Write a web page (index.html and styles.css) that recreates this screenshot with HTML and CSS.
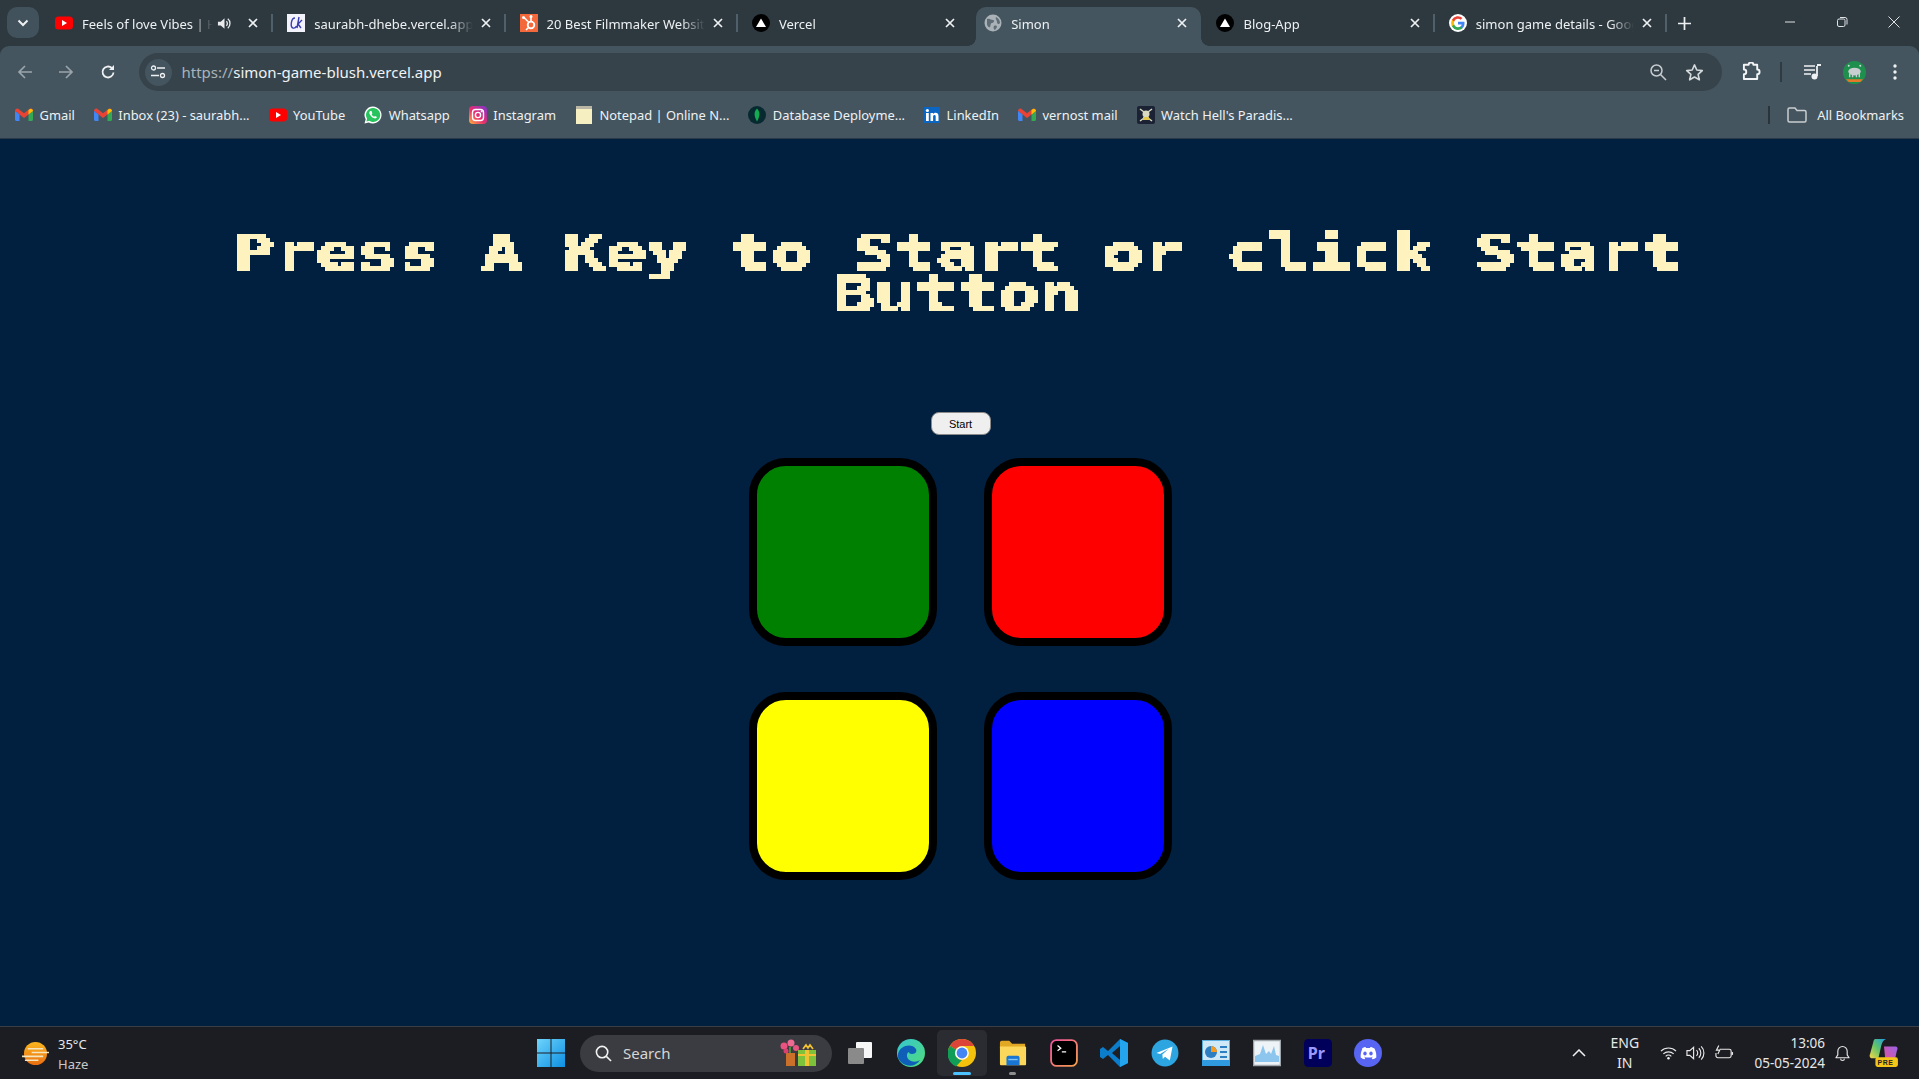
FILE: index.html
```html
<!DOCTYPE html>
<html lang="en">
<head>
<meta charset="utf-8">
<title>Simon</title>
<link rel="stylesheet" href="styles.css">
</head>
<body>
<svg class="defs" width="0" height="0" aria-hidden="true">
  <filter id="pixelate" x="0" y="0" width="100%" height="100%" color-interpolation-filters="sRGB">
    <feFlood x="2" y="2" width="1" height="1" flood-color="#000"/>
    <feComposite width="5" height="5"/>
    <feTile result="grid"/>
    <feComposite in="SourceGraphic" in2="grid" operator="in"/>
    <feComponentTransfer><feFuncA type="discrete" tableValues="0 1 1"/></feComponentTransfer>
    <feMorphology operator="dilate" radius="2"/>
  </filter>
</svg>

<header class="chrome">
  <div class="tabstrip">
    <button class="tab-search"><svg width="12" height="8" viewBox="0 0 12 8"><path d="M1.5 1.5 6 6l4.5-4.5" fill="none" stroke="#eef1f3" stroke-width="2"/></svg></button>
    <div class="tabs">
      <div class="tab">
        <svg class="fav" viewBox="0 0 18 18"><rect x="0" y="2.5" width="18" height="13" rx="3.5" fill="#f00"/><path d="M7 6l5 3-5 3z" fill="#fff"/></svg>
        <span class="tab-title">Feels of love Vibes | Hindi</span>
        <svg class="speaker" viewBox="0 0 16 16"><path d="M1 6v4h3l4 3.5v-11L4 6z" fill="#e8eaed"/><path d="M10 5.5a3.5 3.5 0 0 1 0 5M11.5 3a6.5 6.5 0 0 1 0 10" fill="none" stroke="#e8eaed" stroke-width="1.4"/></svg>
        <svg class="close" viewBox="0 0 10 10"><path d="M1 1l8 8M9 1 1 9" stroke="#eef1f3" stroke-width="1.7"/></svg>
      </div>
      <div class="tab">
        <svg class="fav" viewBox="0 0 18 18"><rect width="18" height="18" fill="#f3f3fb"/><path d="M8 4C4 4 3 13 6 14c1.500.4 3-1 3.500-2M12 3 10 14M15 6l-4 4 3 4" fill="none" stroke="#3a3fae" stroke-width="1.400"/></svg>
        <span class="tab-title">saurabh-dhebe.vercel.app</span>
        <svg class="close" viewBox="0 0 10 10"><path d="M1 1l8 8M9 1 1 9" stroke="#eef1f3" stroke-width="1.7"/></svg>
      </div>
      <div class="tab">
        <svg class="fav" viewBox="0 0 18 18"><rect width="18" height="18" fill="#f4693b"/><circle cx="11" cy="11" r="3.300" fill="none" stroke="#fff" stroke-width="1.800"/><path d="M11 3v5M4 3.500l5 5M6 16l3-3" stroke="#fff" stroke-width="1.600"/><circle cx="3.500" cy="3.500" r="1.500" fill="#fff"/><circle cx="11" cy="2.500" r="1.500" fill="#fff"/></svg>
        <span class="tab-title">20 Best Filmmaker Websites</span>
        <svg class="close" viewBox="0 0 10 10"><path d="M1 1l8 8M9 1 1 9" stroke="#eef1f3" stroke-width="1.7"/></svg>
      </div>
      <div class="tab tab-before-active">
        <svg class="fav" viewBox="0 0 18 18"><circle cx="9" cy="9" r="9" fill="#000"/><path d="M9 4.500l5 8.500H4z" fill="#fff"/></svg>
        <span class="tab-title">Vercel</span>
        <svg class="close" viewBox="0 0 10 10"><path d="M1 1l8 8M9 1 1 9" stroke="#eef1f3" stroke-width="1.7"/></svg>
      </div>
      <div class="tab tab-active">
        <svg class="fav" viewBox="0 0 18 18"><circle cx="9" cy="9" r="8.500" fill="#aab2b8"/><path d="M3 5c3-1 4 1 6 1s1 3-1 3-1 3-2 4-3-1-3-3zM12 3c2 1 4 3 4 6-1 2-3 1-3-1s-2-3-1-5zM10 12c2-1 3 0 3 1l-2 3c-1 0-2-3-1-4z" fill="#5e6c75"/></svg>
        <span class="tab-title">Simon</span>
        <svg class="close" viewBox="0 0 10 10"><path d="M1 1l8 8M9 1 1 9" stroke="#eef1f3" stroke-width="1.7"/></svg>
      </div>
      <div class="tab">
        <svg class="fav" viewBox="0 0 18 18"><circle cx="9" cy="9" r="9" fill="#000"/><path d="M9 4.500l5 8.500H4z" fill="#fff"/></svg>
        <span class="tab-title">Blog-App</span>
        <svg class="close" viewBox="0 0 10 10"><path d="M1 1l8 8M9 1 1 9" stroke="#eef1f3" stroke-width="1.7"/></svg>
      </div>
      <div class="tab">
        <svg class="fav" viewBox="0 0 18 18"><circle cx="9" cy="9" r="9" fill="#fff"/><path d="M15.500 9.200c0-.5 0-1-.1-1.400H9v2.700h3.700a3.200 3.200 0 0 1-1.400 2.100v1.700h2.200c1.300-1.200 2-3 2-5.100z" fill="#4285f4"/><path d="M9 16c1.900 0 3.400-.6 4.500-1.700l-2.200-1.700c-.6.400-1.400.7-2.300.7-1.800 0-3.300-1.200-3.800-2.800H2.900v1.800A7 7 0 0 0 9 16z" fill="#34a853"/><path d="M5.200 10.500a4 4 0 0 1 0-2.900V5.800H2.900a7 7 0 0 0 0 6.500z" fill="#fbbc05"/><path d="M9 4.800c1 0 1.900.4 2.600 1l1.900-1.900A7 7 0 0 0 2.900 5.800l2.300 1.800C5.700 6 7.200 4.800 9 4.800z" fill="#ea4335"/></svg>
        <span class="tab-title">simon game details - Google</span>
        <svg class="close" viewBox="0 0 10 10"><path d="M1 1l8 8M9 1 1 9" stroke="#eef1f3" stroke-width="1.7"/></svg>
      </div>
    </div>
    <svg class="newtab" viewBox="0 0 12 12"><path d="M6 0v12M0 6h12" stroke="#eef1f3" stroke-width="1.600"/></svg>
    <div class="winctl">
      <svg viewBox="0 0 12 12"><path d="M1 6h10" stroke="#dfe3e6" stroke-width="1"/></svg>
      <svg viewBox="0 0 12 12"><rect x="1.500" y="3" width="7.500" height="7.500" rx="1.500" fill="none" stroke="#dfe3e6"/><path d="M4 1.500h5a2 2 0 0 1 2 2v5" fill="none" stroke="#dfe3e6"/></svg>
      <svg viewBox="0 0 12 12"><path d="M.5.500l11 11M11.500.500l-11 11" stroke="#dfe3e6" stroke-width="1"/></svg>
    </div>
  </div>

  <div class="toolbar">
    <svg class="tool tool-dim" viewBox="0 0 16 16"><path d="M15 8H2M8 2 2 8l6 6" fill="none" stroke="#9aa4ab" stroke-width="1.700"/></svg>
    <svg class="tool tool-dim tool-fwd" viewBox="0 0 16 16"><path d="M1 8h13M8 2l6 6-6 6" fill="none" stroke="#9aa4ab" stroke-width="1.700"/></svg>
    <svg class="tool" viewBox="0 0 16 16"><path d="M13.500 8.500a5.500 5.500 0 1 1-1.700-4.500" fill="none" stroke="#eef1f3" stroke-width="1.800"/><path d="M14 1v5H9z" fill="#eef1f3"/></svg>
    <div class="omnibox">
      <span class="site-chip"><svg width="16" height="14" viewBox="0 0 16 14"><circle cx="3.500" cy="3" r="2" fill="none" stroke="#eef1f3" stroke-width="1.300"/><path d="M7 3h8M1 10.500h8" stroke="#eef1f3" stroke-width="1.300"/><circle cx="12.500" cy="10.500" r="2" fill="none" stroke="#eef1f3" stroke-width="1.300"/></svg></span>
      <span class="url"><span class="url-scheme">https://</span>simon-game-blush.vercel.app</span>
      <svg class="omni-icon omni-zoom" viewBox="0 0 18 18"><circle cx="7.500" cy="7.500" r="5.500" fill="none" stroke="#c6ccd0" stroke-width="1.500"/><path d="M11.500 11.500 17 17M5 7.500h5" stroke="#c6ccd0" stroke-width="1.500"/></svg>
      <svg class="omni-icon" viewBox="0 0 20 20"><path d="M10 2l2.400 5.400 5.800.6-4.400 3.900 1.300 5.800L10 14.700l-5.100 3 1.300-5.800L1.800 8l5.800-.6z" fill="none" stroke="#d4d9dc" stroke-width="1.700" stroke-linejoin="round"/></svg>
    </div>
    <svg class="ext" viewBox="0 0 20 20"><path d="M2 4h5a2.500 2.500 0 0 1 5 0h4v5a2.500 2.500 0 0 1 0 5v5H2v-5a2.500 2.500 0 0 0 0-5z" transform="translate(1 -1) scale(.95)" fill="none" stroke="#f2f4f5" stroke-width="2" stroke-linejoin="round"/></svg>
    <span class="tool-sep"></span>
    <svg class="media" viewBox="0 0 18 16"><path d="M0 2h11M0 6h11M0 10h7" stroke="#eef1f3" stroke-width="1.700"/><path d="M13 2v10" stroke="#eef1f3" stroke-width="1.800"/><path d="M13 1h4" stroke="#eef1f3" stroke-width="2"/><circle cx="10.500" cy="12.500" r="3" fill="#eef1f3"/></svg>
    <svg class="avatar" viewBox="0 0 24 24"><circle cx="12" cy="12" r="12" fill="#1f8f4e"/><ellipse cx="12" cy="11" rx="6.500" ry="4" fill="#c9ced0"/><path d="M7 13v4M10 14v3M14 14v3M17 12v5" stroke="#c9ced0" stroke-width="1.500"/><path d="M3 19h18l-3 3H6z" fill="#e4792a"/><circle cx="6" cy="5" r="1" fill="#d5dde0"/><circle cx="18" cy="5" r="1" fill="#d5dde0"/></svg>
    <svg class="kebab" viewBox="0 0 4 16"><circle cx="2" cy="2" r="1.700" fill="#eef1f3"/><circle cx="2" cy="8" r="1.700" fill="#eef1f3"/><circle cx="2" cy="14" r="1.700" fill="#eef1f3"/></svg>
  </div>

  <nav class="bookmarks">
    <a class="bm"><svg class="bm-icon" viewBox="0 0 18 14"><path d="M0 3C0 1 2 0 3.500 1L9 5.200 14.500 1C16 0 18 1 18 3L9 10z" fill="#ea4335"/><path d="M0 3v8.500C0 12.300.7 13 1.500 13h3V6.500z" fill="#4285f4"/><path d="M13.500 13h3c.8 0 1.500-.7 1.500-1.500V3l-4.500 3.500z" fill="#34a853"/><path d="M13.500 2v4.500L18 3c0-2-2-3-3.500-1.800z" fill="#fbbc05"/></svg><span>Gmail</span></a>
    <a class="bm"><svg class="bm-icon" viewBox="0 0 18 14"><path d="M0 3C0 1 2 0 3.500 1L9 5.200 14.500 1C16 0 18 1 18 3L9 10z" fill="#ea4335"/><path d="M0 3v8.500C0 12.300.7 13 1.500 13h3V6.500z" fill="#4285f4"/><path d="M13.500 13h3c.8 0 1.500-.7 1.500-1.500V3l-4.500 3.500z" fill="#34a853"/><path d="M13.500 2v4.500L18 3c0-2-2-3-3.500-1.800z" fill="#fbbc05"/></svg><span>Inbox (23) - saurabh...</span></a>
    <a class="bm"><svg class="bm-icon" viewBox="0 0 18 18"><rect y="2.500" width="18" height="13" rx="3.500" fill="#f00"/><path d="M7 6l5 3-5 3z" fill="#fff"/></svg><span>YouTube</span></a>
    <a class="bm"><svg class="bm-icon" viewBox="0 0 18 18"><path d="M9 .5a8.500 8.500 0 0 0-7.300 12.800L.5 17.500l4.300-1.100A8.500 8.500 0 1 0 9 .5z" fill="#fff"/><path d="M9 2a7 7 0 0 0-5.900 10.700L2.400 15.600l2.900-.8A7 7 0 1 0 9 2z" fill="#27c35c"/><path d="M6.300 5c-.9.500-1.300 1.800-.6 3.200 1 2 2.500 3.300 4.500 4.100 1.400.4 2.500-.2 2.800-1.200l-2-1.200-.9.900c-1.200-.5-2-1.300-2.500-2.500l.8-.9L7.500 5z" fill="#fff"/></svg><span>Whatsapp</span></a>
    <a class="bm"><svg class="bm-icon" viewBox="0 0 18 18"><defs><linearGradient id="ig" x1="0" y1="1" x2="1" y2="0"><stop offset="0" stop-color="#fdb63b"/><stop offset=".45" stop-color="#ea2d6e"/><stop offset="1" stop-color="#7a35d0"/></linearGradient></defs><rect width="18" height="18" rx="4" fill="url(#ig)"/><rect x="3.500" y="3.500" width="11" height="11" rx="3" fill="none" stroke="#fff" stroke-width="1.400"/><circle cx="9" cy="9" r="2.600" fill="none" stroke="#fff" stroke-width="1.400"/><circle cx="12.600" cy="5.400" r=".9" fill="#fff"/></svg><span>Instagram</span></a>
    <a class="bm"><svg class="bm-icon" viewBox="0 0 18 18"><rect x="1" y="1" width="16" height="17" fill="#f6efc2"/><rect x="1" y="0" width="16" height="3" fill="#b9b6a6"/></svg><span>Notepad | Online N...</span></a>
    <a class="bm"><svg class="bm-icon" viewBox="0 0 18 18"><circle cx="9" cy="9" r="9" fill="#062a30"/><path d="M9 2.500c3 3 3.500 7 0 13-3.500-6-3-10 0-13z" fill="#13aa52"/></svg><span>Database Deployme...</span></a>
    <a class="bm"><svg class="bm-icon bm-in" viewBox="0 0 16 16"><rect width="16" height="16" fill="#0a66c2"/><rect x="2" y="6" width="2.800" height="8" fill="#fff"/><circle cx="3.400" cy="3.500" r="1.600" fill="#fff"/><path d="M6.500 6h2.600v1.200c.5-.8 1.400-1.400 2.500-1.400 2.200 0 2.900 1.400 2.900 3.500V14h-2.800V9.800c0-1-.3-1.700-1.200-1.700-1 0-1.400.8-1.400 1.700V14H6.500z" fill="#fff"/></svg><span>LinkedIn</span></a>
    <a class="bm"><svg class="bm-icon" viewBox="0 0 18 14"><path d="M0 3C0 1 2 0 3.500 1L9 5.200 14.500 1C16 0 18 1 18 3L9 10z" fill="#ea4335"/><path d="M0 3v8.500C0 12.300.7 13 1.500 13h3V6.500z" fill="#4285f4"/><path d="M13.500 13h3c.8 0 1.500-.7 1.500-1.500V3l-4.500 3.500z" fill="#34a853"/><path d="M13.500 2v4.500L18 3c0-2-2-3-3.500-1.800z" fill="#fbbc05"/></svg><span>vernost mail</span></a>
    <a class="bm"><svg class="bm-icon" viewBox="0 0 18 18"><rect width="18" height="18" rx="2" fill="#1b2233"/><circle cx="9" cy="8" r="3.500" fill="#d9d9c0"/><path d="M3 3l4 3M15 3l-4 3M3 15l4-3M15 15l-4-3" stroke="#d9d9c0" stroke-width="1.500"/><rect x="6" y="11" width="6" height="3" fill="#e2c84a"/></svg><span>Watch Hell's Paradis...</span></a>
    <span class="bm-sep"></span>
    <a class="bm bm-all"><svg class="bm-icon bm-folder" viewBox="0 0 20 16"><path d="M1 2.500C1 1.700 1.700 1 2.500 1H8l2 2.500h7.500c.8 0 1.500.7 1.500 1.500v8.500c0 .8-.7 1.500-1.500 1.500h-15C1.700 15 1 14.300 1 13.500z" fill="none" stroke="#c9ced1" stroke-width="1.500"/></svg><span>All Bookmarks</span></a>
  </nav>
</header>

<main class="page">
  <h1 class="title"><span class="title-line">Press A Key to Start or click Start</span><span class="title-line">Button</span></h1>
  <button class="start">Start</button>
  <div class="board">
    <div class="pad pad-green"></div>
    <div class="pad pad-red"></div>
    <div class="pad pad-yellow"></div>
    <div class="pad pad-blue"></div>
  </div>
</main>

<footer class="taskbar">
  <div class="weather">
    <svg class="weather-icon" viewBox="0 0 28 26"><defs><linearGradient id="sun" x1="0" y1="0" x2="0" y2="1"><stop offset="0" stop-color="#fbb81f"/><stop offset="1" stop-color="#ea6d10"/></linearGradient></defs><circle cx="14" cy="13" r="12" fill="url(#sun)"/><path d="M6 8h16M10 12h18M0 16h22M3 20h14" stroke="#f3e6c0" stroke-width="1.700"/></svg>
    <div class="weather-text"><span>35°C</span><span class="haze">Haze</span></div>
  </div>
  <svg class="winlogo" viewBox="0 0 28 28"><defs><linearGradient id="win" x1="0" y1="0" x2="1" y2="1"><stop offset="0" stop-color="#6ed4fb"/><stop offset="1" stop-color="#0d8fe2"/></linearGradient></defs><path d="M0 0h13.500v13.500H0zM14.500 0H28v13.500H14.500zM0 14.500h13.500V28H0zM14.500 14.500H28V28H14.500z" fill="url(#win)"/></svg>
  <div class="search">
    <svg class="search-icon" viewBox="0 0 18 18"><circle cx="7.500" cy="7.500" r="6" fill="none" stroke="#f2f2f2" stroke-width="1.700"/><path d="M12 12l5 5" stroke="#f2f2f2" stroke-width="1.700"/></svg>
    <span class="search-text">Search</span>
    <svg class="gift" viewBox="0 0 40 28"><rect x="8" y="14" width="9" height="13" fill="#c9712a"/><path d="M12 14V8" stroke="#4c8a3a" stroke-width="2"/><circle cx="6" cy="7" r="3.500" fill="#e9537f"/><circle cx="13" cy="4" r="3.500" fill="#ee6a92"/><circle cx="18" cy="9" r="3" fill="#e9537f"/><circle cx="8" cy="12" r="2.500" fill="#d9406e"/><rect x="20" y="11" width="18" height="16" fill="#7ec13a"/><rect x="27" y="11" width="4" height="16" fill="#f3c233"/><rect x="20" y="15" width="18" height="2" fill="#f3c233"/><path d="M25 10l3-4 2 3 2-3 3 4" fill="none" stroke="#f3c233" stroke-width="1.700"/></svg>
  </div>
  <div class="apps">
    <div class="app"><svg viewBox="0 0 28 28"><rect x="10" y="3" width="16" height="16" rx="1" fill="#f7f7f7"/><rect x="2" y="9" width="16" height="16" rx="1" fill="#8a8a8a"/></svg></div>
    <div class="app"><svg viewBox="0 0 28 28"><defs><linearGradient id="edge" x1="0" y1="0" x2="1" y2="1"><stop offset="0" stop-color="#37c6d0"/><stop offset="1" stop-color="#4fdc7a"/></linearGradient></defs><circle cx="14" cy="14" r="14" fill="url(#edge)"/><path d="M1 15C3 6 15 4 19 10c1 2 0 5-4 5-2 0-3-1-3-2-3 1-3 7 2 9 3 1 6 1 9-1-3 5-9 7-14 5C4 24 0 20 1 15z" fill="#0f5fb8"/></svg></div>
    <div class="app app-active"><svg viewBox="0 0 28 28"><circle cx="14" cy="14" r="14" fill="#f4c20d"/><path d="M14 0a14 14 0 0 1 12.100 7H14a7 7 0 0 0-6.100 3.500L1.900 7A14 14 0 0 1 14 0z" fill="#db4437"/><path d="M1.900 7l6 3.500A7 7 0 0 0 14 21l-6 6.500A14 14 0 0 1 1.900 7z" fill="#0f9d58"/><circle cx="14" cy="14" r="6.800" fill="#fff"/><circle cx="14" cy="14" r="5.400" fill="#4285f4"/></svg><span class="app-bar"></span></div>
    <div class="app"><svg viewBox="0 0 30 28"><path d="M1 3c0-1 1-2 2-2h8l3 3h14v5H1z" fill="#e0a823"/><path d="M1 7h27c.6 0 1 .4 1 1v18c0 .6-.4 1-1 1H2c-.6 0-1-.4-1-1z" fill="#fbd75b"/><path d="M8 19c0-1 1-2 2-2h10c1 0 2 1 2 2v8H8z" fill="#1976d2"/><path d="M10 21h10" stroke="#7fc4f5" stroke-width="1.500"/></svg><span class="app-bar app-bar-open"></span></div>
    <div class="app"><svg viewBox="0 0 26 26"><defs><linearGradient id="term" x1="0" y1="0" x2="1" y2="1"><stop offset="0" stop-color="#f0509e"/><stop offset="1" stop-color="#f3a04a"/></linearGradient></defs><rect x="1" y="1" width="24" height="24" rx="5" fill="#000" stroke="url(#term)" stroke-width="1.700"/><path d="M7 6l3 2.500L7 11M11 12h4" fill="none" stroke="#fff" stroke-width="1.200"/></svg></div>
    <div class="app"><svg viewBox="0 0 28 28"><path d="M20 0l8 4v20l-8 4L8 16l-5 4-3-2v-8l3-2 5 4z" fill="#0b7dcb"/><path d="M20 0l8 4v20l-8 4z" fill="#25a4ee"/><path d="M20 7l-8 7 8 7z" fill="#1e1f24"/></svg></div>
    <div class="app"><svg viewBox="0 0 26 26"><circle cx="13" cy="13" r="12.500" fill="#2ca5e0"/><path d="M5 13l15-6-2.500 13-4.500-3.500-2 2-.5-4 6-5.500-8 5z" fill="#fff"/></svg></div>
    <div class="app"><svg viewBox="0 0 28 26"><rect x=".5" y=".5" width="27" height="25" fill="#cfe8f7" stroke="#5aaee0"/><rect x="0" y="20" width="28" height="6" fill="#2f9ae0"/><circle cx="9" cy="12" r="6" fill="#2d7fc2"/><path d="M9 12V6a6 6 0 0 1 6 6z" fill="#f39a1f"/><path d="M18 7h7M18 12h7M18 17h7" stroke="#2d7fc2" stroke-width="1.800"/></svg></div>
    <div class="app"><svg viewBox="0 0 28 26"><rect x=".5" y=".5" width="27" height="25" fill="#eef3f7" stroke="#9ea6ac" stroke-width="1.500"/><path d="M2 22V16l5-2 3-9 3 9 3-3 2 3 3-8 2 9 3 1v6z" fill="#8cc6ee"/></svg></div>
    <div class="app"><svg viewBox="0 0 26 26"><rect width="26" height="26" rx="4" fill="#00005b"/><text class="pr" x="3.500" y="18.500">Pr</text></svg></div>
    <div class="app"><svg viewBox="0 0 28 28"><circle cx="14" cy="14" r="14" fill="#5865f2"/><path d="M7.500 9.500C10 8 11 8 11.500 8l.5 1h4l.5-1c.5 0 1.500 0 4 1.500 1.500 3 2 6 1.800 9-1.300 1-2.500 1.500-3.800 1.800l-1-1.500 1.500-.8-.4-.3c-2.500 1.200-5.700 1.200-8.200 0l-.4.300 1.500.8-1 1.500c-1.300-.3-2.500-.8-3.800-1.800-.2-3 .3-6 1.800-9z" fill="#fff"/><ellipse cx="11" cy="14.500" rx="1.700" ry="2" fill="#5865f2"/><ellipse cx="17" cy="14.500" rx="1.700" ry="2" fill="#5865f2"/></svg></div>
  </div>
  <div class="tray">
    <svg class="chev" viewBox="0 0 14 8"><path d="M1 7l6-6 6 6" fill="none" stroke="#f0f0f0" stroke-width="1.500"/></svg>
    <div class="lang"><span>ENG</span><span>IN</span></div>
    <svg class="wifi" viewBox="0 0 18 14"><path d="M1 5a11.500 11.500 0 0 1 16 0M3.500 8a8 8 0 0 1 11 0M6 10.500a4.300 4.300 0 0 1 6 0" fill="none" stroke="#e8e8e8" stroke-width="1.200"/><circle cx="9" cy="12.500" r="1.300" fill="#f5f5f5"/></svg>
    <svg class="vol" viewBox="0 0 20 16"><path d="M1 5.500v5h3l4 3.500V2L4 5.500z" fill="none" stroke="#e8e8e8" stroke-width="1.200"/><path d="M11 5a4 4 0 0 1 0 6M13.500 3a7 7 0 0 1 0 10M16 1a10 10 0 0 1 0 14" fill="none" stroke="#e8e8e8" stroke-width="1.200"/></svg>
    <svg class="batt" viewBox="0 0 20 16"><path d="M5 4h10a2 2 0 0 1 2 2v5a2 2 0 0 1-2 2H3a2 2 0 0 1-2-2V8" fill="none" stroke="#e8e8e8" stroke-width="1.200"/><path d="M17.500 7h1.500v3h-1.500z" fill="#e8e8e8"/><path d="M4 0 1.500 5H5L3 9" fill="none" stroke="#e8e8e8" stroke-width="1.200"/></svg>
    <div class="clock"><span>13:06</span><span>05-05-2024</span></div>
    <svg class="bell" viewBox="0 0 16 18"><path d="M8 1.500a5 5 0 0 0-5 5v4l-2 3h14l-2-3v-4a5 5 0 0 0-5-5zM6 14.500a2 2 0 0 0 4 0" fill="none" stroke="#e8e8e8" stroke-width="1.200" stroke-linejoin="round"/></svg>
    <svg class="copilot" viewBox="0 0 28 28"><defs><linearGradient id="cp1" x1="0" y1="1" x2="1" y2="0"><stop offset="0" stop-color="#f9d649"/><stop offset=".5" stop-color="#5fc46b"/><stop offset="1" stop-color="#1c9be8"/></linearGradient><linearGradient id="cp2" x1="0" y1="1" x2="1" y2="0"><stop offset="0" stop-color="#f0508a"/><stop offset="1" stop-color="#9a62e8"/></linearGradient></defs><path d="M6 1h10c-3 1-4 4-5 8l-2 9c-.4 1-1 1-2 1H3c-2 0-3-2-2-4l3-11c.4-2 1-3 2-3z" fill="url(#cp1)"/><path d="M14 8h10c3 0 3 2 2 4l-2 9c-.5 2-1 3-3 3h-9c3-1 3-4 3-6z" fill="url(#cp2)"/><rect x="6" y="18" width="21" height="9" rx="2" fill="#f5c518"/><text class="pre" x="8" y="25.300">PRE</text></svg>
  </div>
</footer>
</body>
</html>
```

FILE: styles.css
```css
* { box-sizing: border-box; }
html, body { margin: 0; height: 100%; }
body {
  display: flex;
  flex-direction: column;
  height: 1079px;
  overflow: hidden;
  background: #011f3f;
  font-family: "Noto Sans", "Open Sans", sans-serif;
}
.defs { position: absolute; }

/* Tab strip */
.chrome { flex: none; background: #2d383f; color: #eef1f3; }
.tabstrip { display: flex; align-items: stretch; height: 46px; padding-top: 7px; position: relative; }
.tab-search {
  flex: none; width: 32px; height: 31px; margin-left: 7px; margin-right: 2px;
  border: 0; border-radius: 10px; background: #42525c;
  display: flex; align-items: center; justify-content: center; padding: 0;
}
.tabs { display: flex; flex: none; }
.tab {
  width: 232.3px; display: flex; align-items: center; position: relative;
  padding: 0 15px 7px 14px; font-size: 13px;
}
.tab::after {
  content: ""; position: absolute; right: 0; top: 7px; width: 2px; height: 18px; background: #50606b;
}
.tab-before-active::after { display: none; }
.fav { width: 18px; height: 18px; flex: none; position: relative; }
.tab-title {
  flex: 1; min-width: 0; margin: 1px 0 0 9px; white-space: nowrap; overflow: hidden; position: relative;
  -webkit-mask-image: linear-gradient(to right, #000 85%, transparent 100%);
  mask-image: linear-gradient(to right, #000 85%, transparent 100%);
}
.close { width: 10px; height: 10px; flex: none; margin-left: 8px; position: relative; }
.speaker { width: 15px; height: 15px; flex: none; margin-left: 4px; margin-right: 8px; }
.tab-active::before {
  content: ""; position: absolute; left: 6px; right: 1px; top: 0; bottom: 0;
  background: #44555f; border-radius: 10px 10px 0 0;
}
.tab-active::after {
  left: -2px; right: -7px; top: auto; bottom: 0; width: auto; height: 8px;
  background:
    radial-gradient(circle at 0 0, transparent 7.5px, #44555f 8px) left bottom / 8px 8px no-repeat,
    radial-gradient(circle at 100% 0, transparent 7.5px, #44555f 8px) right bottom / 8px 8px no-repeat;
}
.newtab { width: 13px; height: 13px; flex: none; margin: 10px 0 0 11px; }
.winctl { display: flex; margin-left: auto; margin-right: 19px; gap: 40px; padding-top: 9px; }
.winctl svg { width: 12px; height: 12px; }

/* Toolbar */
.toolbar {
  display: flex; align-items: center; height: 45px; padding: 7px 18px 0 17px;
  background: #44555f; border-radius: 9px 9px 0 0;
}
.tool { width: 16px; height: 16px; flex: none; margin-right: 25px; }
.tool-fwd { margin-right: 26px; }
.omnibox {
  flex: none; width: 1583px; height: 38px; margin-left: -2.5px; margin-right: 19.5px;
  display: flex; align-items: center; padding-left: 6px; padding-right: 18px;
  background: #37434b; border-radius: 19px; font-size: 15px;
}
.site-chip {
  width: 27px; height: 27px; border-radius: 50%; background: #44555f; flex: none;
  display: flex; align-items: center; justify-content: center;
}
.url { margin-left: 10px; flex: 1; white-space: nowrap; color: #f0f2f4; }
.url-scheme { color: #aab3b9; }
.omni-icon { width: 19px; height: 19px; flex: none; }
.omni-zoom { margin-right: 18px; width: 18px; height: 18px; }
.ext { width: 20px; height: 20px; flex: none; }
.tool-sep { width: 2px; height: 20px; background: #2f3a41; margin: 0 22px 0 19px; flex: none; }
.media { width: 18px; height: 16px; flex: none; margin-right: 21px; }
.avatar { width: 23px; height: 23px; flex: none; margin-right: 27px; }
.kebab { width: 4px; height: 16px; flex: none; }

/* Bookmarks */
.bookmarks {
  display: flex; align-items: center; gap: 19px; height: 48px; padding: 0 15px;
  background: #44555f; border-bottom: 1px solid #2a3a49; font-size: 12.9px;
}
.bm { display: flex; align-items: center; gap: 6.5px; white-space: nowrap; color: #eef1f3; }
.bm-icon { width: 18px; height: 18px; flex: none; }
.bm-in { width: 16px; height: 16px; }
.bm-sep { width: 2px; height: 18px; background: #2a343b; margin-left: auto; margin-right: -2px; }
.bm-all { gap: 10px; }
.bm-folder { width: 20px; height: 16px; }

/* Page */
.page { flex: 1; display: flex; flex-direction: column; align-items: center; min-height: 0; background: #011f3f; }
.title {
  width: 1500px; margin: 94px 5px 0 0; font: 700 48px/39px "DejaVu Sans Mono", monospace;
  color: #fef2bf;
  filter: url(#pixelate);
  transform: scale(1.035);
  transform-origin: center top;
}
.title-line {
  display: block; width: fit-content; margin: 0 auto; letter-spacing: -.33px; white-space: nowrap;
  transform: scaleX(1.4);
}
.start {
  width: 60px; height: 23px; margin: 101px 0 0 2px; padding: 0; border: 1px solid #8a8a8a; border-radius: 8px;
  background: #efefef; color: #000; font: 11px "Liberation Sans", sans-serif; flex: none;
}
.board { display: grid; grid-template-columns: 188px 188px; grid-auto-rows: 188px; column-gap: 47px; row-gap: 46px; margin-top: 23px; margin-left: 1px; }
.pad { border: 8px solid #000; border-radius: 37px; }
.pad-green { background: #008000; }
.pad-red { background: #f00; }
.pad-yellow { background: #ff0; }
.pad-blue { background: #00f; }

/* Taskbar */
.taskbar {
  flex: none; height: 53px; display: flex; align-items: center; position: relative;
  background: #1c1d22; border-top: 1px solid #3b3e44; color: #e8e8e8; padding-left: 22px;
}
.weather { display: flex; align-items: center; gap: 9px; width: 515px; flex: none; font-size: 13px; line-height: 20px; padding-top: 2px; }
.weather-icon { width: 27px; height: 25px; flex: none; margin-top: -2px; }
.weather-text { display: flex; flex-direction: column; }
.haze { color: #c9c9c9; }
.winlogo { width: 28px; height: 28px; flex: none; }
.search {
  width: 252px; height: 37px; margin-left: 15px; border-radius: 19px; background: #3a3c41; flex: none;
  display: flex; align-items: center; padding: 0 14px 0 15px; font-size: 15px; color: #d6d6d6;
}
.search-icon { width: 17px; height: 17px; flex: none; }
.search-text { margin-left: 11px; flex: 1; }
.gift { width: 40px; height: 28px; flex: none; }
.apps { display: flex; margin-left: 3px; flex: none; }
.app { width: 50.8px; height: 46px; display: flex; align-items: center; justify-content: center; position: relative; border-radius: 5px; }
.app svg { width: 28px; height: 28px; }
.app-active { background: #2b2c31; }
.app-bar { position: absolute; left: 50%; bottom: 1px; width: 18px; height: 3px; margin-left: -9px; border-radius: 2px; background: #4cc2ff; }
.app-bar-open { width: 7px; margin-left: -3.5px; background: #8e8e8e; }
.pr { font: 700 15px "Noto Sans", sans-serif; fill: #9999ff; }
.pre { font: 700 6.500px "Liberation Sans", sans-serif; fill: #222; letter-spacing: .5px; }
.tray { display: flex; align-items: center; position: absolute; right: 0; top: 0; bottom: 0; font-size: 14px; }
.chev { width: 14px; height: 8px; }
.lang { display: flex; flex-direction: column; align-items: center; line-height: 20px; margin-left: 23.8px; width: 30px; }
.wifi { width: 17px; height: 14px; margin-left: 19.7px; }
.vol { width: 19px; height: 16px; margin-left: 9px; }
.batt { width: 19px; height: 16px; margin-left: 10.5px; }
.clock { display: flex; flex-direction: column; align-items: flex-end; line-height: 20px; margin-left: 19px; width: 72px; font-size: 13.5px; white-space: nowrap; }
.bell { width: 15px; height: 17px; margin-left: 10px; }
.copilot { width: 30px; height: 30px; margin: 0 20px 0 19px; }
```
